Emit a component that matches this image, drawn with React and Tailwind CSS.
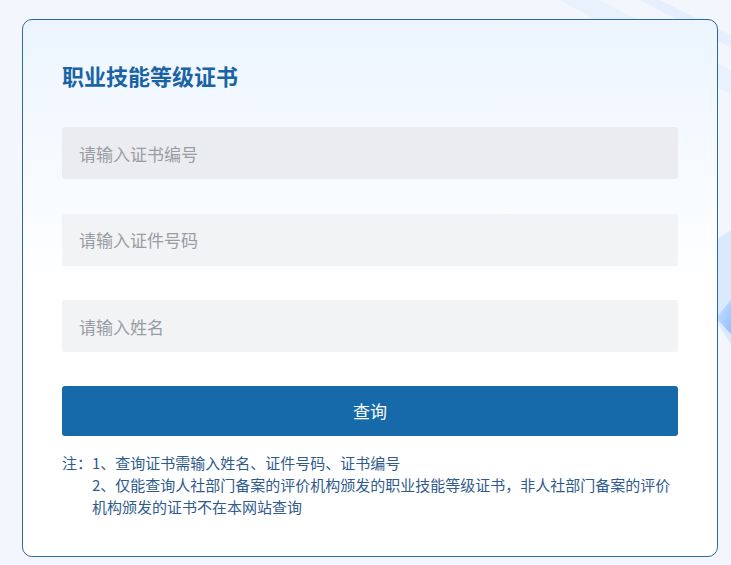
import React, { useState } from "react";

const FONT = { fontFamily: '"Noto Sans CJK SC", "Noto Sans", sans-serif' };

export default function App() {
  const [certNo, setCertNo] = useState("");
  const [idNo, setIdNo] = useState("");
  const [name, setName] = useState("");

  const inputCls =
    "w-full h-[52px] rounded-[3px] px-[17px] text-[17px] text-gray-700 outline-none placeholder:text-[#9a9ca3]";

  return (
    <div className="relative min-h-[565px] overflow-hidden bg-[#f3f7fd]" style={FONT}>
      {/* background decoration */}
      <svg className="absolute inset-0 h-full w-full" viewBox="0 0 731 565" preserveAspectRatio="none">
        <defs>
          <linearGradient id="tri" x1="0" y1="0" x2="1" y2="1">
            <stop offset="0" stopColor="#cfe3ff" />
            <stop offset="1" stopColor="#8fc0ff" />
          </linearGradient>
        </defs>
        <path d="M560 0 L600 0 L731 70 L731 95 Z" fill="#e6effd" opacity="0.8" />
        <path d="M640 0 L660 0 L731 35 L731 48 Z" fill="#e3ecfb" opacity="0.8" />
        <path d="M700 250 L731 230 L731 345 L716 320 Z" fill="#dbe9fd" />
        <path d="M716 318 L731 300 L731 334 Z" fill="url(#tri)" />
      </svg>

      <div className="relative pt-[19px] pl-[22px]">
        <div className="w-[696px] h-[538px] rounded-[10px] border border-[#2a6aa8] bg-gradient-to-b from-[#ecf5ff] via-white to-white pl-[39px] pr-[39px] pt-[41px]">
          <h1 className="text-[22px] leading-[28px] font-bold text-[#1a63a5]">职业技能等级证书</h1>

          <div className="mt-[38px] flex flex-col gap-[34.5px]">
            <input
              className={`${inputCls} bg-[#ebecef]`}
              placeholder="请输入证书编号"
              value={certNo}
              onChange={(e) => setCertNo(e.target.value)}
            />
            <input
              className={`${inputCls} bg-[#f2f3f5]`}
              placeholder="请输入证件号码"
              value={idNo}
              onChange={(e) => setIdNo(e.target.value)}
            />
            <input
              className={`${inputCls} bg-[#f2f3f5]`}
              placeholder="请输入姓名"
              value={name}
              onChange={(e) => setName(e.target.value)}
            />
          </div>

          <button className="mt-[34px] w-full h-[50px] rounded-[3px] bg-[#176aa9] text-[17px] text-white">
            查询
          </button>

          <div className="mt-[16px] flex text-[15px] leading-[22px] text-[#2f5b8c]">
            <span className="shrink-0">注：</span>
            <div>
              <p>1、查询证书需输入姓名、证件号码、证书编号</p>
              <p>2、仅能查询人社部门备案的评价机构颁发的职业技能等级证书，非人社部门备案的评价机构颁发的证书不在本网站查询</p>
            </div>
          </div>
        </div>
      </div>
    </div>
  );
}
